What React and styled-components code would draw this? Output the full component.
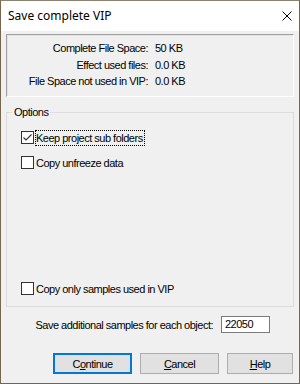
import React from 'react';
import styled, { createGlobalStyle } from 'styled-components';

const GlobalStyle = createGlobalStyle`
    html, body {
        margin: 0;
        padding: 0;
        background: #ffffff;
    }
    * {
        box-sizing: border-box;
    }
`;

//#region styled-elements
const Window = styled.div`
    width: 300px;
    height: 384px;
    display: flex;
    flex-direction: column;
    border: 1px solid #76664f;
    border-top-color: #8d8170;
    background: #f0f0f0;
    font-family: "Liberation Sans", Arial, sans-serif;
    font-size: 11px;
    letter-spacing: -0.5px;
    color: #000;
`;

const TitleBar = styled.div`
    height: 30px;
    flex: none;
    display: flex;
    align-items: center;
    justify-content: space-between;
    padding: 0 7px 1px 7px;
    background: #ffffff;
`;

const Title = styled.span`
    font-family: "Noto Sans", "Open Sans", sans-serif;
    font-size: 12px;
    letter-spacing: 0;
`;

const CloseIcon = styled.svg`
    width: 10px;
    height: 10px;
    display: block;
`;

const Body = styled.div`
    flex: 1;
    display: flex;
    flex-direction: column;
    padding: 3px 5px 9px 5px;
`;

const SummaryPanel = styled.div`
    height: 63px;
    flex: none;
    display: grid;
    grid-template-columns: 141px auto;
    grid-auto-rows: 16.5px;
    column-gap: 7px;
    align-items: center;
    padding-top: 5px;
    border: 1px solid #ffffff;
    border-top-color: #a0a0a0;
    border-left-color: #a0a0a0;
    box-shadow: inset 1px 1px 0 #e3e3e3;
`;

const SummaryLabel = styled.span`
    text-align: right;
`;

const Group = styled.fieldset`
    flex: 1;
    display: flex;
    flex-direction: column;
    margin: 9px 0 0 0;
    padding: 0;
    min-width: 0;
    border: 1px solid #dcdcdc;
`;

const Legend = styled.legend`
    margin-left: 5px;
    padding: 0 2px;
    line-height: 13px;
`;

const GroupContent = styled.div`
    flex: 1;
    display: flex;
    flex-direction: column;
    gap: 8px;
    padding: 10px 0 9px 14px;
`;

const CheckRow = styled.div`
    display: flex;
    align-items: center;
    height: 17px;
    margin-top: ${p => (p.$bottom ? 'auto' : '0')};
`;

const Box = styled.span`
    width: 13px;
    height: 13px;
    flex: none;
    margin-right: 1px;
    border: 1px solid #333333;
    background: #ffffff;
    display: flex;
    align-items: center;
    justify-content: center;
`;

const CheckLabel = styled.span`
    border: 1px dotted ${p => (p.$focused ? '#000' : 'transparent')};
    padding: 0 1px 0 0;
    line-height: 14px;
`;

const SamplesRow = styled.div`
    flex: none;
    display: flex;
    align-items: center;
    justify-content: flex-end;
    gap: 8px;
    margin-top: 9px;
    padding-right: 24px;
`;

const NumberInput = styled.div`
    width: 49px;
    height: 17px;
    border: 1px solid #7a7a7a;
    background: #ffffff;
    padding-left: 3px;
    line-height: 15px;
`;

const ButtonRow = styled.div`
    flex: none;
    display: flex;
    justify-content: flex-end;
    gap: 8px;
    margin-top: 20px;
    padding-right: 1px;
`;

const Button = styled.button`
    width: ${p => p.$width}px;
    height: 21px;
    margin: 0;
    padding: 0;
    font-family: inherit;
    font-size: 11px;
    letter-spacing: inherit;
    color: #000;
    background: #e1e1e1;
    border: 1px solid #adadad;
    box-shadow: ${p => (p.$default ? 'inset 0 0 0 1px #0078d7' : 'none')};
    border-color: ${p => (p.$default ? '#0078d7' : '#adadad')};
`;
//#endregion

const Check = ({ checked }) => (
    <Box>
        {checked &&
            <svg width="11" height="11" viewBox="0 0 11 11">
                <path d="M1.5 5.5 L4 8 L9.5 2.5" fill="none" stroke="#333" strokeWidth="1.1" />
            </svg>
        }
    </Box>
);

const App = () => {
    const summary = [
        ['Complete File Space:', '50 KB'],
        ['Effect used files:', '0.0 KB'],
        ['File Space not used in VIP:', '0.0 KB'],
    ];

    return (
        <React.Fragment>
            <GlobalStyle />
            <Window>
                <TitleBar>
                    <Title>Save complete VIP</Title>
                    <CloseIcon viewBox="0 0 10 10">
                        <path d="M0.5 0.5 L9.5 9.5 M9.5 0.5 L0.5 9.5" stroke="#000" strokeWidth="1" />
                    </CloseIcon>
                </TitleBar>
                <Body>
                    <SummaryPanel>
                        {summary.map(([label, value]) => (
                            <React.Fragment key={label}>
                                <SummaryLabel>{label}</SummaryLabel>
                                <span>{value}</span>
                            </React.Fragment>
                        ))}
                    </SummaryPanel>
                    <Group>
                        <Legend>Options</Legend>
                        <GroupContent>
                            <CheckRow>
                                <Check checked />
                                <CheckLabel $focused>Keep project sub folders</CheckLabel>
                            </CheckRow>
                            <CheckRow>
                                <Check />
                                <CheckLabel>Copy unfreeze data</CheckLabel>
                            </CheckRow>
                            <CheckRow $bottom>
                                <Check />
                                <CheckLabel>Copy only samples used in VIP</CheckLabel>
                            </CheckRow>
                        </GroupContent>
                    </Group>
                    <SamplesRow>
                        <span>Save additional samples for each object:</span>
                        <NumberInput>22050</NumberInput>
                    </SamplesRow>
                    <ButtonRow>
                        <Button $width={79} $default>C<u>o</u>ntinue</Button>
                        <Button $width={79}><u>C</u>ancel</Button>
                        <Button $width={66}><u>H</u>elp</Button>
                    </ButtonRow>
                </Body>
            </Window>
        </React.Fragment>
    );
};

export default App;
